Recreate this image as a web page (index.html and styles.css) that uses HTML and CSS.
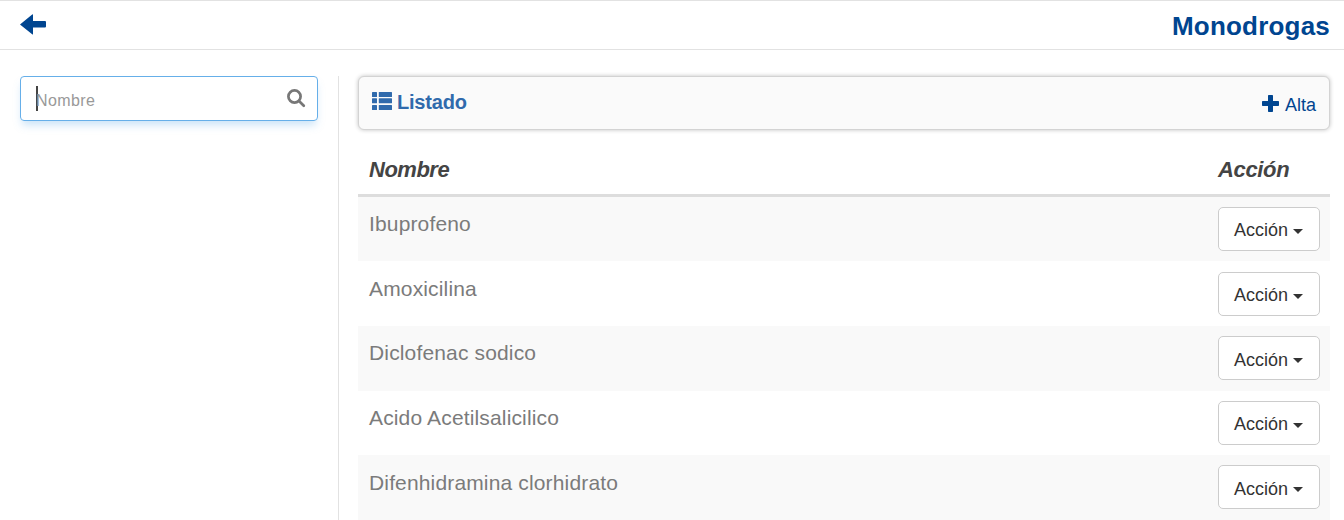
FILE: index.html
```
<!DOCTYPE html>
<html lang="es">
<head>
<meta charset="utf-8">
<title>Monodrogas</title>
<link rel="stylesheet" href="styles.css">
</head>
<body>
<header class="topbar">
  <a class="back" aria-label="Volver"><svg width="26" height="22" viewBox="0 0 26 22"><path d="M0 10.6 12.2.4Q13 0 13 .8V7H25Q26 7 26 8V12.4Q26 13.4 25 13.4H13V19.9Q13 20.9 12.2 20.3Z"/></svg></a>
  <h1 class="title">Monodrogas</h1>
</header>
<main class="layout">
  <aside class="sidebar">
    <div class="search">
      <span class="caret-bar"></span>
      <span class="placeholder">Nombre</span>
      <svg class="lens" width="19" height="19" viewBox="0 0 19 19"><circle cx="7.5" cy="7.5" r="6.1"/><path d="M12 12 16.8 16.8"/></svg>
    </div>
  </aside>
  <section class="content">
    <div class="panel">
      <div class="list-title"><svg width="20" height="19" viewBox="0 0 20 19"><rect width="5" height="5" rx=".5"/><rect x="6.8" width="13.2" height="5" rx=".5"/><rect y="6.2" width="5" height="5" rx=".5"/><rect x="6.8" y="6.2" width="13.2" height="5" rx=".5"/><rect y="13" width="5" height="5" rx=".5"/><rect x="6.8" y="13" width="13.2" height="5" rx=".5"/></svg><span>Listado</span></div>
      <a class="add"><svg width="17" height="17" viewBox="0 0 17 17"><path d="M6.7 0H10.3Q11 0 11 .7V6H16.3Q17 6 17 6.7V10.3Q17 11 16.3 11H11V16.3Q11 17 10.3 17H6.7Q6 17 6 16.3V11H.7Q0 11 0 10.3V6.7Q0 6 .7 6H6V.7Q6 0 6.7 0Z"/></svg><span>Alta</span></a>
    </div>
    <div class="table">
      <div class="row head"><div class="name">Nombre</div><div class="action">Acción</div></div>
      <div class="row"><div class="name">Ibuprofeno</div><div class="action"><button class="btn">Acción<i class="arrow"></i></button></div></div>
      <div class="row"><div class="name">Amoxicilina</div><div class="action"><button class="btn">Acción<i class="arrow"></i></button></div></div>
      <div class="row"><div class="name">Diclofenac sodico</div><div class="action"><button class="btn">Acción<i class="arrow"></i></button></div></div>
      <div class="row"><div class="name">Acido Acetilsalicilico</div><div class="action"><button class="btn">Acción<i class="arrow"></i></button></div></div>
      <div class="row"><div class="name">Difenhidramina clorhidrato</div><div class="action"><button class="btn">Acción<i class="arrow"></i></button></div></div>
    </div>
  </section>
</main>
</body>
</html>
```
FILE: styles.css
```
* { box-sizing: border-box; }
body {
  margin: 0;
  height: 520px;
  overflow: hidden;
  background: #fff;
  color: #7b7b7b;
  font-family: "Liberation Sans", Arial, sans-serif;
}
svg { display: block; flex: none; }
.topbar {
  display: flex;
  justify-content: space-between;
  height: 50px;
  padding: 0 14px 0 20px;
  border-top: 1px solid #e2e2e2;
  border-bottom: 1px solid #e2e2e2;
}
.back { padding-top: 13px; fill: #004590; }
.title {
  margin: 0;
  padding-top: 10px;
  color: #004590;
  font-size: 26px;
  line-height: 30px;
  letter-spacing: .2px;
}
.layout { display: flex; height: 470px; padding: 26px 14px 0 20px; }
.sidebar { width: 319px; padding-right: 20px; border-right: 1px solid #e2e2e2; }
.search {
  display: flex;
  width: 298px;
  height: 45px;
  padding: 0 11px 0 16px;
  border: 1px solid #66afe9;
  border-radius: 4px;
  box-shadow: 0 6px 8px -2px rgba(102, 175, 233, .35);
}
.caret-bar { width: 2px; height: 25px; margin: 9px -2px 0 -1px; background: #444; }
.placeholder {
  flex: 1;
  padding-top: 14px;
  color: #999;
  font-size: 16px;
  line-height: 20px;
  letter-spacing: .4px;
}
.lens { margin-top: 12px; fill: none; stroke: #777; stroke-width: 2.7; stroke-linecap: round; }
.content { flex: 1; padding-left: 19px; }
.panel {
  display: flex;
  justify-content: space-between;
  height: 54px;
  padding: 0 13px;
  background: #fafafa;
  border: 1px solid #d3d3d3;
  border-radius: 6px;
  box-shadow: 0 0 4px rgba(0, 0, 0, .24);
}
.list-title {
  display: flex;
  gap: 5px;
  padding-top: 15px;
  color: #306aac;
  fill: #306aac;
  font-size: 20px;
  font-weight: bold;
  line-height: 21px;
  letter-spacing: -.2px;
}
.add {
  display: flex;
  gap: 6px;
  padding-top: 18px;
  color: #004590;
  fill: #004590;
  font-size: 18px;
  line-height: 20px;
}
.table { margin-top: 13.8px; }
.row {
  display: grid;
  grid-template-columns: 1fr 112px;
  height: 64.6px;
  font-size: 21px;
  line-height: 26px;
}
.row:nth-child(even) { background: #f9f9f9; }
.name { padding: 14.4px 0 0 11px; letter-spacing: .15px; }
.action { padding-top: 10.3px; }
.head {
  height: 53px;
  border-bottom: 3px solid #ddd;
  color: #444;
  font-size: 22px;
  font-weight: bold;
  font-style: italic;
}
.head .name, .head .action { padding-top: 13.2px; letter-spacing: -.5px; }
.head .action { letter-spacing: -.35px; }
.btn {
  display: flex;
  align-items: center;
  gap: 5px;
  width: 102px;
  height: 44px;
  padding: 2.7px 0 0 15px;
  background: #fff;
  border: 1px solid #ccc;
  border-radius: 5px;
  color: #333;
  font: 18px/24px "Liberation Sans", Arial, sans-serif;
}
.arrow {
  margin-top: 2px;
  border-top: 5px solid #333;
  border-left: 5px solid transparent;
  border-right: 5px solid transparent;
}
```
